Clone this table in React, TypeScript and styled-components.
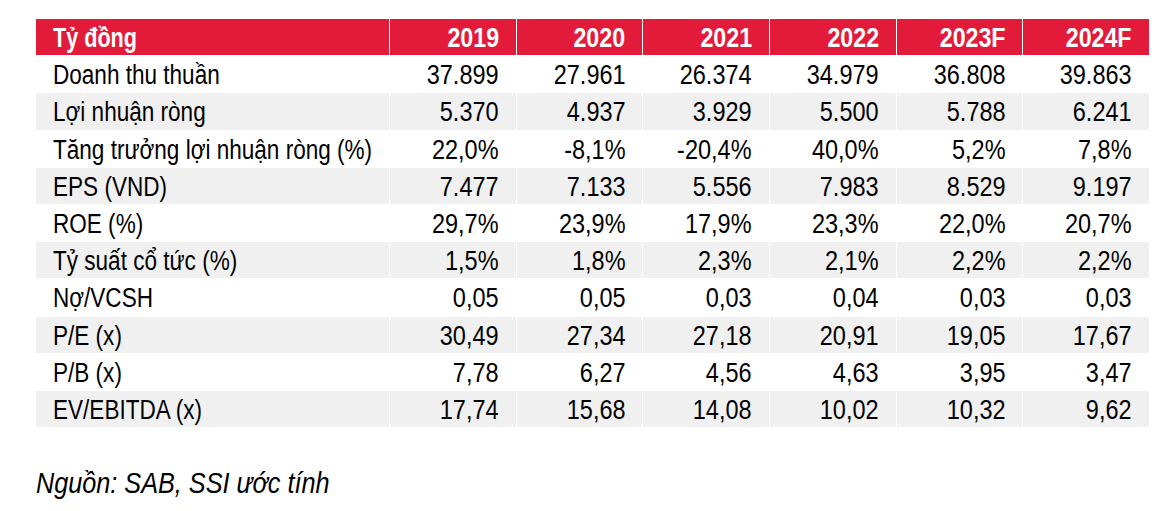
import React from "react";
import styled, { createGlobalStyle } from "styled-components";

const Global = createGlobalStyle`
  html, body { margin: 0; padding: 0; background: #ffffff; }
  body { font-family: "Liberation Sans", Arial, sans-serif; color: #000; }
  *, *::before, *::after { box-sizing: border-box; }
`;

const Page = styled.div`
  padding: 19px 0 0 36px;
  width: 1149px;
`;

const Table = styled.div`
  display: grid;
  grid-template-columns: 353px repeat(6, 1fr);
  column-gap: 1px;
  row-gap: 1px;
  background: #ffffff;
`;

const Cell = styled.div<{ $head?: boolean; $shade?: boolean; $label?: boolean }>`
  height: 36.2px;
  display: flex;
  align-items: center;
  justify-content: ${(p) => (p.$label ? "flex-start" : "flex-end")};
  padding: ${(p) => (p.$label ? "3px 0 0 17px" : "3px 17px 0 0")};
  font-size: 27px;
  line-height: 1;
  white-space: nowrap;
  background: ${(p) => (p.$head ? "#e31b3b" : p.$shade ? "#f0f0f0" : "#ffffff")};
  color: ${(p) => (p.$head ? "#ffffff" : "#000000")};
  font-weight: ${(p) => (p.$head ? 700 : 400)};
`;

/* Arial-Narrow-like condensed look from Liberation Sans */
const Narrow = styled.span<{ $origin: "left" | "right"; $scale?: number }>`
  display: inline-block;
  transform: scaleX(${(p) => p.$scale ?? 0.87});
  transform-origin: ${(p) => p.$origin} center;
`;

const Source = styled.div`
  margin-top: 40px;
  font-size: 29px;
  line-height: 1.15;
  font-style: italic;
  white-space: nowrap;
`;

const headers = ["Tỷ đồng", "2019", "2020", "2021", "2022", "2023F", "2024F"];

const rows: string[][] = [
  ["Doanh thu thuần", "37.899", "27.961", "26.374", "34.979", "36.808", "39.863"],
  ["Lợi nhuận ròng", "5.370", "4.937", "3.929", "5.500", "5.788", "6.241"],
  ["Tăng trưởng lợi nhuận ròng (%)", "22,0%", "-8,1%", "-20,4%", "40,0%", "5,2%", "7,8%"],
  ["EPS (VND)", "7.477", "7.133", "5.556", "7.983", "8.529", "9.197"],
  ["ROE (%)", "29,7%", "23,9%", "17,9%", "23,3%", "22,0%", "20,7%"],
  ["Tỷ suất cổ tức (%)", "1,5%", "1,8%", "2,3%", "2,1%", "2,2%", "2,2%"],
  ["Nợ/VCSH", "0,05", "0,05", "0,03", "0,04", "0,03", "0,03"],
  ["P/E (x)", "30,49", "27,34", "27,18", "20,91", "19,05", "17,67"],
  ["P/B (x)", "7,78", "6,27", "4,56", "4,63", "3,95", "3,47"],
  ["EV/EBITDA (x)", "17,74", "15,68", "14,08", "10,02", "10,32", "9,62"],
];

export default function App() {
  return (
    <Page>
      <Global />
      <Table>
        {headers.map((h, i) => (
          <Cell key={h} $head $label={i === 0}>
            <Narrow $origin={i === 0 ? "left" : "right"} $scale={i === 0 ? 0.8 : 0.86}>
              {h}
            </Narrow>
          </Cell>
        ))}
        {rows.map((r, ri) =>
          r.map((v, ci) => (
            <Cell key={`${ri}-${ci}`} $label={ci === 0} $shade={ri % 2 === 1}>
              <Narrow $origin={ci === 0 ? "left" : "right"} $scale={ci === 0 ? 0.835 : 0.87}>
                {v}
              </Narrow>
            </Cell>
          ))
        )}
      </Table>
      <Source>
        <Narrow $origin="left">Nguồn: SAB, SSI ước tính</Narrow>
      </Source>
    </Page>
  );
}
